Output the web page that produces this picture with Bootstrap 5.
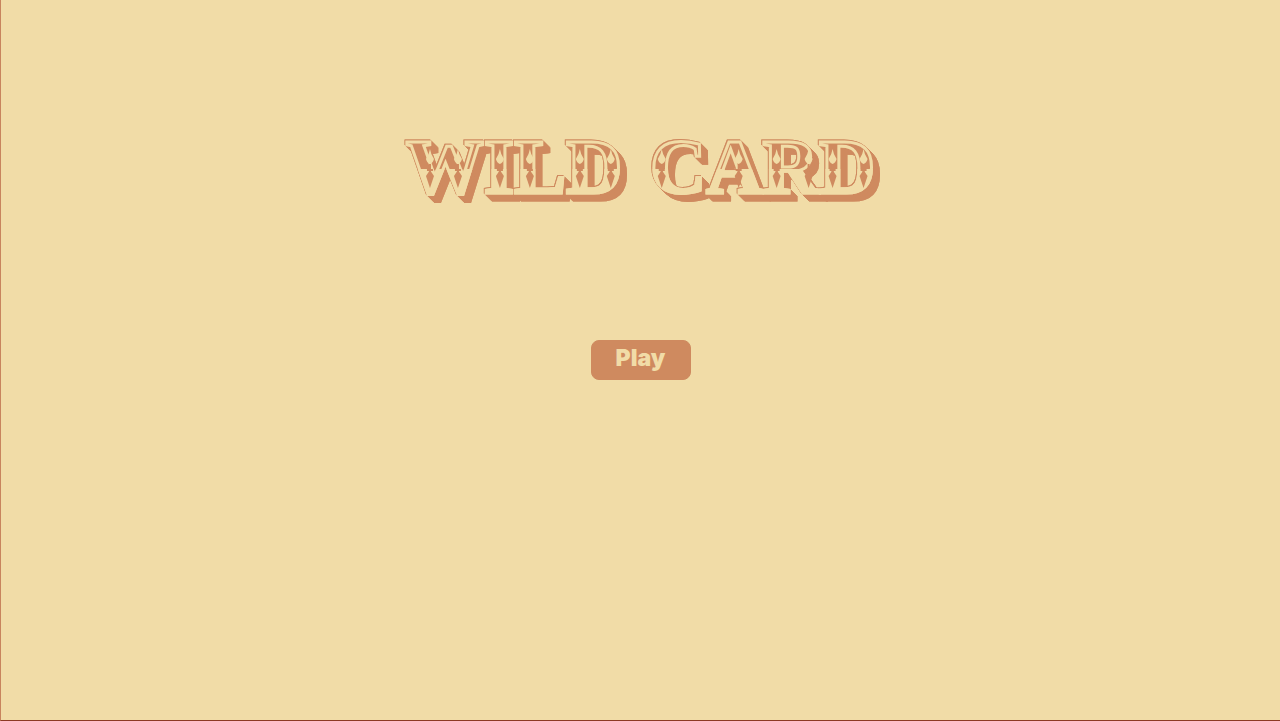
<!DOCTYPE html>
<html lang="en">
<head>
<meta charset="utf-8">
<meta name="viewport" content="width=device-width, initial-scale=1">
<title>Wild Card</title>
<link href="https://cdn.jsdelivr.net/npm/bootstrap@5.3.0/dist/css/bootstrap.min.css" rel="stylesheet">
<style>
:root { --sand: #f1dca7; --clay: #cf8a5f; }
body { background: var(--sand); }
.start-screen { border-left: 1px solid #c8845e; border-bottom: 1px solid #8c3a24; padding-top: 121px; gap: 127px; }
.game-title {
  font: bold 78px/92px "Liberation Serif", serif;
  color: transparent;
  background: linear-gradient(var(--clay) 52%, var(--sand) 52%);
  -webkit-background-clip: text;
  background-clip: text;
  -webkit-text-stroke: 3px var(--sand);
  filter: drop-shadow(-1px -1px 0 var(--clay)) drop-shadow(1px 1px 0 var(--clay)) drop-shadow(2px 2px 0 var(--clay)) drop-shadow(4px 4px 0 var(--clay));
}
.title-ornaments { left: 0; top: 0; pointer-events: none; }
.btn-play {
  --bs-btn-color: var(--sand); --bs-btn-bg: var(--clay); --bs-btn-border-color: var(--clay);
  --bs-btn-hover-color: var(--sand); --bs-btn-hover-bg: #c17b50; --bs-btn-hover-border-color: #c17b50;
  font: 900 23px/28px Inter, "DejaVu Sans", sans-serif;
  width: 100px; height: 40px; border-radius: 8px; padding: 2px 0 6px;
}
</style>
</head>
<body>
<main class="start-screen min-vh-100 d-flex flex-column align-items-center">
  <div class="position-relative">
    <h1 class="game-title m-0 text-nowrap">WILD <span class="d-inline-block ms-2">CARD</span></h1>
    <svg class="title-ornaments position-absolute w-100 h-100" viewBox="0 0 470 92" aria-hidden="true">
      <defs>
        <g id="ornament">
          <path d="M0 28 Q1 34 4 38 Q3 42 0 43 Q-3 42 -4 38 Q-1 34 0 28Z" fill="#f1dca7"/>
          <path d="M0 43V52 M-3 49H3" stroke="#cf8a5f" stroke-width="2" fill="none"/>
          <path d="M0 49 L4 55 L0 67 L-4 55Z" fill="#cf8a5f"/>
        </g>
      </defs>
      <use href="#ornament" x="24"/><use href="#ornament" x="52"/>
      <use href="#ornament" x="94"/><use href="#ornament" x="124"/>
      <use href="#ornament" x="174"/><use href="#ornament" x="205"/>
      <use href="#ornament" x="256"/><use href="#ornament" x="333"/>
      <use href="#ornament" x="371"/><use href="#ornament" x="403"/>
      <use href="#ornament" x="427"/><use href="#ornament" x="458"/>
    </svg>
  </div>
  <button type="button" class="btn btn-play">Play</button>
</main>
<script src="https://cdn.jsdelivr.net/npm/bootstrap@5.3.0/dist/js/bootstrap.bundle.min.js"></script>
</body>
</html>
